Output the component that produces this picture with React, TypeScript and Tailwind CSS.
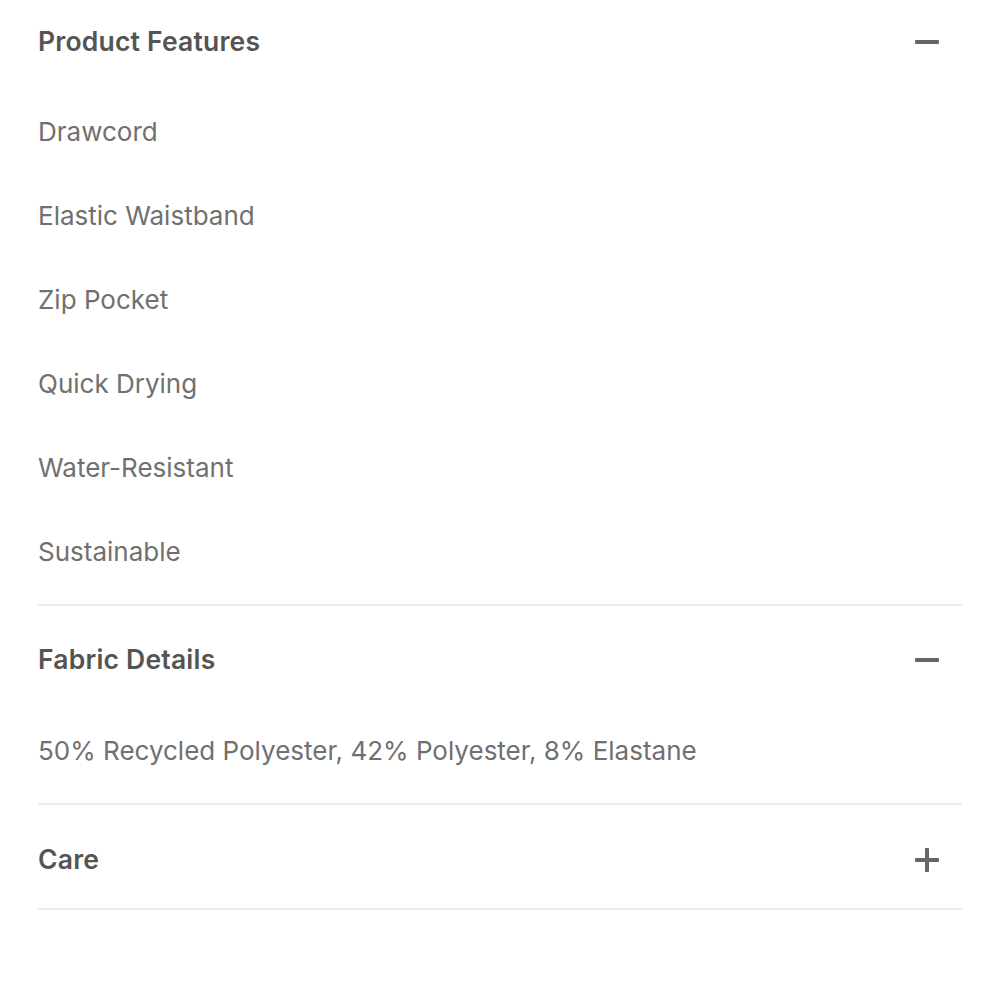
import React from "react";

const font = { fontFamily: 'Inter, "Noto Sans", sans-serif' };

function Minus() {
  return (
    <div className="relative w-[24px] h-[24px]">
      <div className="absolute left-0 top-[10px] w-[24px] h-[4px] bg-[#666666] rounded-[1px]" />
    </div>
  );
}

function Plus() {
  return (
    <div className="relative w-[24px] h-[24px]">
      <div className="absolute left-0 top-[10px] w-[24px] h-[4px] bg-[#666666] rounded-[1px]" />
      <div className="absolute top-0 left-[10px] w-[4px] h-[24px] bg-[#666666] rounded-[1px]" />
    </div>
  );
}

function Header({ title, open, first, last }: { title: string; open: boolean; first?: boolean; last?: boolean }) {
  return (
    <div
      className={
        "flex items-center justify-between pr-[23px] " +
        (first ? "h-[84px]" : last ? "h-[103px] pt-[6px]" : "h-[100px] pt-[8px]")
      }
    >
      <span className="text-[26.5px] font-semibold text-[#545454] tracking-[0.2px]">{title}</span>
      {open ? <Minus /> : <Plus />}
    </div>
  );
}

function Item({ text }: { text: string }) {
  return (
    <div className="h-[84px] flex items-center text-[26px] text-[#707070] font-normal">
      {text}
    </div>
  );
}

function Divider() {
  return <div className="h-[2px] bg-[#ececec]" />;
}

export default function App() {
  const features = ["Drawcord", "Elastic Waistband", "Zip Pocket", "Quick Drying", "Water-Resistant", "Sustainable"];
  return (
    <div className="w-[1000px] h-[1000px] bg-white" style={font}>
      <div className="ml-[38px] w-[924px]">
        <Header title="Product Features" open first />
        <div className="pt-[5px] pb-[11px]">
          {features.map((f) => (
            <Item key={f} text={f} />
          ))}
        </div>
        <Divider />
        <Header title="Fabric Details" open />
        <div className="pt-[2px] pb-[11px]">
          <Item text="50% Recycled Polyester, 42% Polyester, 8% Elastane" />
        </div>
        <Divider />
        <Header title="Care" open={false} last />
        <Divider />
      </div>
    </div>
  );
}
